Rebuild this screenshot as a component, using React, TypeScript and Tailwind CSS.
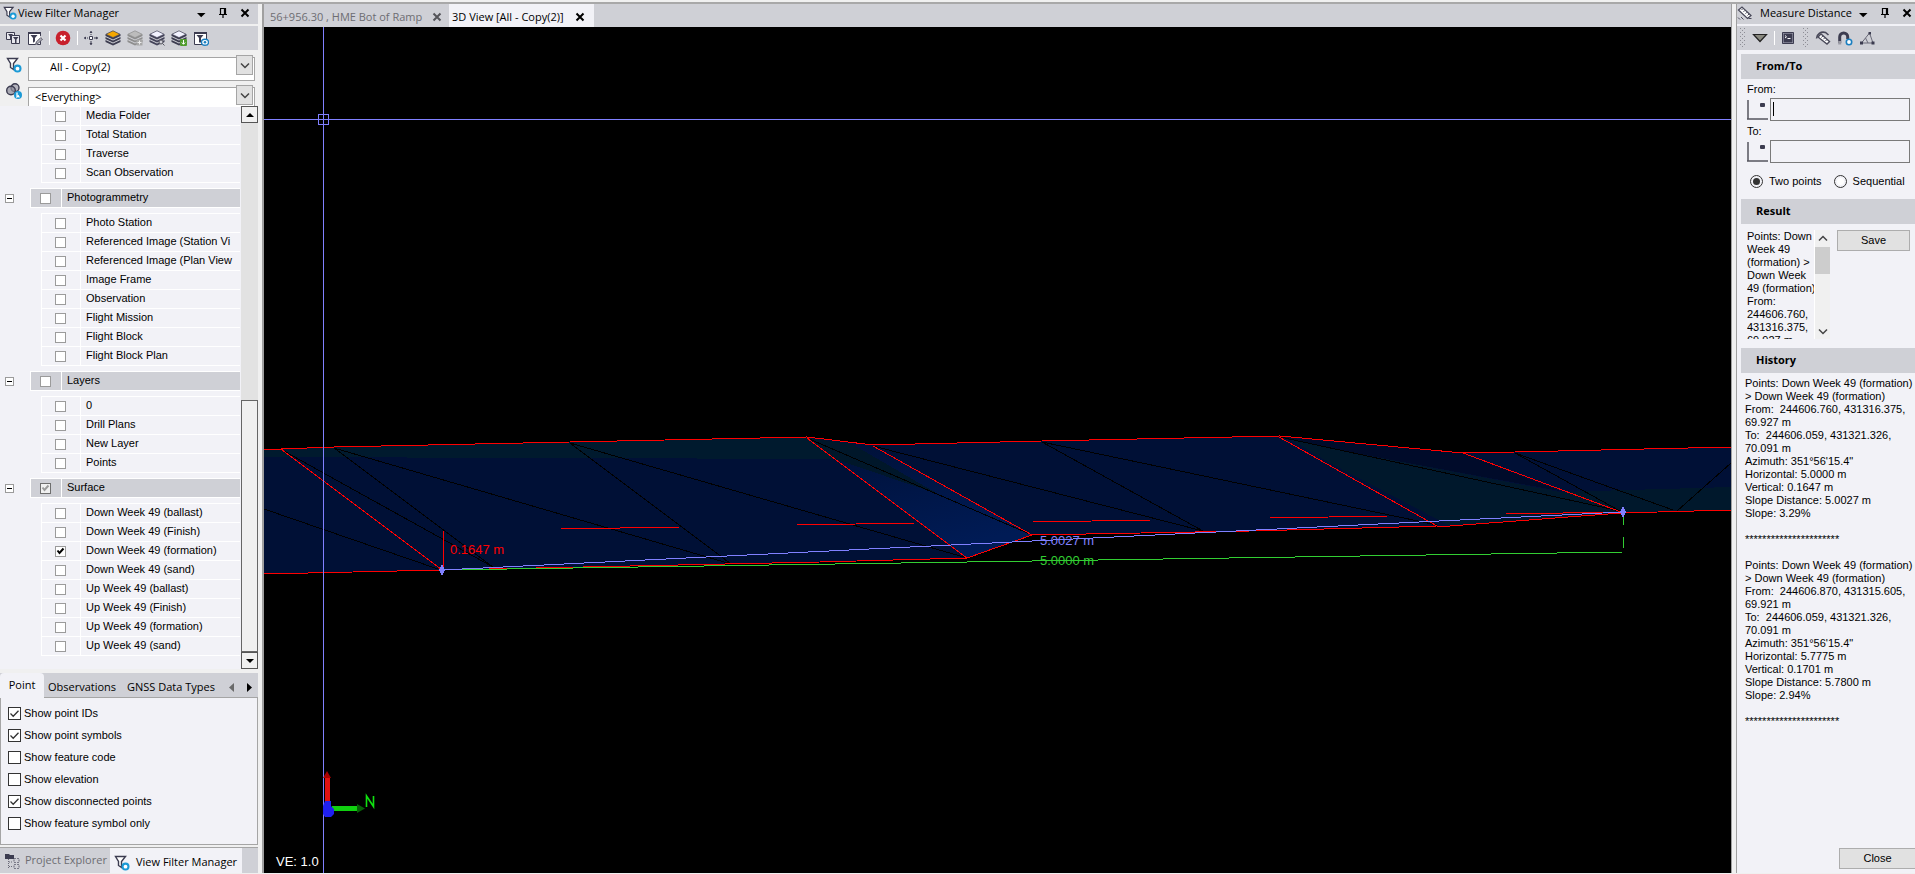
import React from "react";

const UI = "font-['Liberation_Sans',Arial,sans-serif] text-[11px]";
const SEGOE = "font-['Open_Sans','Noto_Sans',sans-serif] text-[11px]";

/* ---------- icons ---------- */

function Svg({ children, size = "size-4" }: { children: React.ReactNode; size?: string }) {
  return (
    <svg viewBox="0 0 16 16" className={`${size} shrink-0`} fill="none" aria-hidden="true">
      {children}
    </svg>
  );
}

function FilterStarIcon({ size }: { size?: string }) {
  return (
    <Svg size={size}>
      <path d="M1.500 1.500h10L7.500 6.500v6l-3-2v-4z" fill="#fff" stroke="#3c3c50" strokeWidth="1.400" />
      <circle cx="11.500" cy="11.500" r="4" fill="#1b9ad6" />
      <circle cx="11.500" cy="11.700" r="1.900" fill="#fff" />
    </Svg>
  );
}

function CirclesIcon() {
  return (
    <Svg>
      <circle cx="9" cy="4.800" r="4" fill="#b4b4be" stroke="#3c3c50" strokeWidth="1.400" />
      <circle cx="5" cy="7.500" r="4.300" fill="#8c8c9a" fillOpacity=".7" stroke="#3c3c50" strokeWidth="1.400" />
      <circle cx="12" cy="12" r="4" fill="#1b9ad6" />
      <path d="M11 9.500v4.500l1.300-1.200 1 1.700" stroke="#fff" strokeWidth="1.300" />
    </Svg>
  );
}

function CopyFilterIcon() {
  return (
    <Svg>
      <path d="M1.500 2.500h8v7h-8z" fill="#e8e8ee" stroke="#3c3c50" />
      <path d="M3 4h5L6 6.500V9H5V6.500z" fill="#3c3c50" />
      <path d="M6.500 5.500h8v8h-8z" fill="#e8e8ee" stroke="#3c3c50" />
      <path d="M8 7h5.500L11.500 9.500V13h-1.500V9.500z" fill="#3c3c50" />
    </Svg>
  );
}

function EditFilterIcon() {
  return (
    <Svg>
      <path d="M1.500 2.500h12v12h-12z" fill="#fff" stroke="#3c3c50" />
      <path d="M1 2h13v2H1z" fill="#3c3c50" />
      <path d="M3.500 5h7L8 8v4.500H6V8z" fill="#3c3c50" />
      <path d="M8 14l6.500-7" stroke="#fff" strokeWidth="4" />
      <path d="M8.500 14.500l1-2.700L13.800 7.500l1.700 1.600-4.500 4.500z" fill="#b0b0b8" stroke="#4a4a5a" strokeWidth=".9" />
    </Svg>
  );
}

function StopIcon() {
  return (
    <Svg>
      <circle cx="8" cy="8" r="7.300" fill="#c8202c" />
      <path d="M5.500 5.500l5 5m0-5l-5 5" stroke="#fff" strokeWidth="2.200" />
    </Svg>
  );
}

function MoveIcon() {
  return (
    <Svg>
      <path d="M6.500 6.500h3v3h-3z" fill="#fff" stroke="#3c3c50" />
      <path d="M8 1v4M8 11v4M1 8h4M11 8h4" stroke="#3c3c50" strokeDasharray="2 1" />
      <path d="M8 1L6.500 3h3zM8 15l-1.500-2h3zM1 8l2-1.500v3zM15 8l-2-1.500v3z" fill="#3c3c50" />
    </Svg>
  );
}

function LayersIcon({ top, body, badge }: { top: string; body: string; badge?: "plus" | "down" | "search" }) {
  return (
    <Svg>
      <path d="M.5 10v2L8 15.500l7.500-3.500v-2L8 13.500z" fill={body} />
      <path d="M.5 7v2L8 12.500 15.500 9V7L8 10.500z" fill={body} />
      <path d="M.5 4v2L8 9.500 15.500 6V4L8 7.500z" fill={body} />
      <path d="M8 .8l7 3.400L8 7.600 1 4.200z" fill={top} stroke={body} strokeWidth=".7" />
      {badge === "plus" && (
        <>
          <rect x="9" y="9" width="7" height="7" rx="1" fill="#4f9a2c" />
          <path d="M12.500 10v4M10.800 12.500l1.700 1.800 1.700-1.800" stroke="#fff" />
        </>
      )}
      {badge === "down" && (
        <>
          <rect x="9.500" y="9.500" width="6" height="6" fill="#a8a8a8" />
          <path d="M12.500 10.500v4M10.500 12.500h4" stroke="#ececec" />
        </>
      )}
      {badge === "search" && (
        <>
          <circle cx="12" cy="12" r="2" fill="#d0d0d8" stroke="#55555f" />
          <path d="M13.500 13.500L15.500 15.500" stroke="#55555f" />
        </>
      )}
    </Svg>
  );
}

function FilterEyeIcon() {
  return (
    <Svg>
      <path d="M1.500 2.500h12v12h-12z" fill="#fff" stroke="#3c3c50" />
      <path d="M1 2h13v2H1z" fill="#3c3c50" />
      <path d="M3.500 5h7L8 8v4.500H6V8z" fill="#3c3c50" />
      <ellipse cx="12" cy="12.300" rx="3.500" ry="3" fill="#fff" stroke="#1b7fc0" strokeWidth="1.400" />
      <circle cx="12" cy="12.300" r="1.300" fill="#1b7fc0" />
    </Svg>
  );
}

function CaretIcon() {
  return (
    <Svg>
      <path d="M4 8h8.500L8.200 12.200z" fill="#000" />
    </Svg>
  );
}

function PinIcon() {
  return (
    <Svg>
      <path d="M5.500 9V3.500h5V9M9.500 3.500V9M4 9.500h8M8 9.500V13" stroke="#000" strokeWidth="1.200" />
    </Svg>
  );
}

function CloseIcon({ color = "#000" }: { color?: string }) {
  return (
    <Svg>
      <path d="M4.500 4.500l7 7m0-7l-7 7" stroke={color} strokeWidth="2" />
    </Svg>
  );
}

function RulerIcon() {
  return (
    <Svg>
      <path d="M1.500 5l3.500-3 9 8.500-3.500 3z" fill="#fff" stroke="#4a4a5a" strokeWidth="1.300" />
      <path d="M6 3.500L4.500 5M8 5.300L6.500 6.800M10 7.200L8.500 8.700M12 9L10.500 10.500" stroke="#4a4a5a" />
      <path d="M1 12.500l2 2M4 12l2.500 2.500M14.500 13.500h-3" stroke="#4a4a5a" />
    </Svg>
  );
}

function TapeIcon() {
  return (
    <Svg>
      <path d="M3 7l3-3 8.500 7.500-2.500 2.500z" fill="#fff" stroke="#4a4a5a" strokeWidth="1.400" />
      <path d="M1.500 8.500C2 4 6 1 10.500 2.500L13.500 5" stroke="#4a4a5a" strokeWidth="1.600" />
      <path d="M8 5.800L6.500 7.500M10 7.500L8.500 9.200M12 9.300L10.500 11" stroke="#4a4a5a" />
    </Svg>
  );
}

function MagnetIcon() {
  return (
    <Svg>
      <path d="M2.700 13V7a4 4 0 018 0v2" stroke="#3c3c50" strokeWidth="3" />
      <path d="M1.200 11h3v3.500h-3z" fill="#9a9aa4" />
      <circle cx="12" cy="12" r="2.700" fill="#fff" stroke="#1b7fc0" strokeWidth="1.600" />
    </Svg>
  );
}

function AngleIcon() {
  return (
    <Svg>
      <path d="M2.500 13L10.500 3M2 13h12M10.500 3L14 13M6.500 8l2.500 5" stroke="#6a6a78" />
      <path d="M9.500 2h2.500v2.500H9.500zM1 11.500h3v3H1zM12.500 11.500h3v3h-3z" fill="#3c3c50" />
    </Svg>
  );
}

function TerminalIcon() {
  return (
    <Svg>
      <path d="M2.500 2.500h11v11h-11z" fill="#3c3c50" stroke="#3c3c50" />
      <path d="M3 3.500h10M3.500 3v10M12.500 3v10M3 12.500h10" stroke="#a0a0b0" strokeWidth=".6" />
      <path d="M5 5.500l1.500 1.300L5 8M7.500 8.500h3" stroke="#fff" />
    </Svg>
  );
}

function DropIcon() {
  return (
    <Svg>
      <path d="M1.500 4.500h13L8 11.500z" fill="#8a8a80" stroke="#222" strokeWidth="1.200" />
    </Svg>
  );
}

function CoordIcon() {
  return (
    <svg viewBox="0 0 22 22" className="size-[22px] shrink-0" fill="none" aria-hidden="true">
      <path d="M1 1v19M0 20h21" stroke="#55555f" strokeWidth="1.500" />
      <rect x="13" y="4" width="5" height="4" rx="1" fill="#3c3c50" />
    </svg>
  );
}

function ExplorerIcon() {
  return (
    <Svg>
      <path d="M0 1h4l1 1h4v4H0z" fill="#3c3c50" />
      <path d="M3.500 6v9M4 9h4M4 13.500h4" stroke="#6a6a78" strokeDasharray="1 1" />
      <path d="M9 5.500h5v4H9zM9 11.500h5v4H9z" stroke="#7a7a88" strokeWidth="1.200" strokeDasharray="2 1" />
    </Svg>
  );
}

function Chevron({ dir }: { dir: "up" | "down" }) {
  return (
    <Svg>
      <path d={dir === "down" ? "M4 6.500l4 4 4-4" : "M4 9.500l4-4 4 4"} stroke="#444" strokeWidth="1.500" />
    </Svg>
  );
}

/* ---------- controls ---------- */

function ToolButton({ label, children }: { label: string; children: React.ReactNode }) {
  return (
    <button aria-label={label} className="flex w-[22px] shrink-0 items-center justify-center">
      {children}
    </button>
  );
}

function Separator() {
  return (
    <span className="flex w-1.5 shrink-0 justify-center">
      <span className="h-3.5 w-px bg-white" />
    </span>
  );
}

function Grip() {
  return (
    <svg viewBox="0 0 6 20" className="h-5 w-1.5 shrink-0" aria-hidden="true">
      {[0, 4, 8, 12, 16].map((y) => (
        <path key={y} d={`M0 ${y}h1v1H0zM4 ${y}h1v1H4zM2 ${y + 2}h1v1H2z`} fill="#8e8e96" />
      ))}
    </svg>
  );
}

function PanelButtons() {
  return (
    <>
      <ToolButton label="Panel menu"><CaretIcon /></ToolButton>
      <ToolButton label="Auto hide"><PinIcon /></ToolButton>
      <ToolButton label="Close panel"><CloseIcon /></ToolButton>
    </>
  );
}

type State = "off" | "on" | "partial";

function TreeCheck({ label, state = "off" }: { label: string; state?: State }) {
  return (
    <span className="relative flex size-[11px] shrink-0">
      <input
        type="checkbox"
        aria-label={label}
        defaultChecked={state !== "off"}
        className={
          state === "partial"
            ? "size-full appearance-none border border-[#6e6e6e] bg-[#f0f0f0]"
            : "size-full appearance-none border border-[#9b9b9b] bg-white"
        }
      />
      {state !== "off" && (
        <svg viewBox="0 0 11 11" className="pointer-events-none absolute inset-0" fill="none" aria-hidden="true">
          <path d="M2.500 4.500l2 2.500 4-4.500" stroke={state === "on" ? "#000" : "#9b9b9b"} strokeWidth="2" />
        </svg>
      )}
    </span>
  );
}

function Items({ names, checked }: { names: string[]; checked?: string }) {
  return (
    <ul className="ml-[41px] border-b border-l border-white">
      {names.map((name) => (
        <li key={name} className="flex h-[19px] border-t border-white">
          <span className="flex w-[39px] items-center border-r border-white pl-[13px]">
            <TreeCheck label={name} state={name === checked ? "on" : "off"} />
          </span>
          <span className="flex-1 overflow-hidden pl-[5px] leading-4 whitespace-nowrap">{name}</span>
        </li>
      ))}
    </ul>
  );
}

function Group({ title, names, state, checked }: { title: string; names: string[]; state?: State; checked?: string }) {
  return (
    <section className="mt-[5px]">
      <div className="mb-[5px] flex h-5 items-center">
        <button
          aria-label={`Collapse ${title}`}
          className="mr-4 ml-[5px] flex size-[9px] items-center justify-center border border-[#9b9b9b] bg-white"
        >
          <span className="h-px w-[5px] bg-black" />
        </button>
        <div className="flex h-full flex-1 border border-r-0 border-white bg-[#cfd0d6]">
          <span className="flex w-[31px] items-center border-r border-white pl-[9px]">
            <TreeCheck label={title} state={state} />
          </span>
          <span className="pl-[5px] leading-4">{title}</span>
        </div>
      </div>
      <Items names={names} checked={checked} />
    </section>
  );
}

function Combo({ label, options, indent }: { label: string; options: string[]; indent: string }) {
  return (
    <div className="relative h-6 flex-1">
      <select
        aria-label={label}
        className={`${SEGOE} ${indent} size-full appearance-none border border-[#a5a5a5] bg-white pb-1`}
      >
        {options.map((o) => (
          <option key={o}>{o}</option>
        ))}
      </select>
      <span className="pointer-events-none absolute top-0.5 right-0.5 bottom-0.5 flex w-[17px] items-center justify-center border border-[#a5a5a5] bg-[#e1e1e1]">
        <Chevron dir="down" />
      </span>
    </div>
  );
}

function Option({ label, on }: { label: string; on?: boolean }) {
  return (
    <label className="flex h-[22px] items-center gap-[3px]">
      <span className="relative flex size-[13px]">
        <input type="checkbox" defaultChecked={on} className="size-full appearance-none border border-[#333] bg-white" />
        {on && (
          <svg viewBox="0 0 13 13" className="pointer-events-none absolute inset-0" fill="none" aria-hidden="true">
            <path d="M2.500 6.500l2.700 2.700L10.500 3.700" stroke="#333" strokeWidth="1.300" />
          </svg>
        )}
      </span>
      {label}
    </label>
  );
}

/* ---------- left panel ---------- */

function FilterPanel() {
  return (
    <aside className="flex w-[258px] shrink-0 flex-col bg-[#f0f0f0]">
      <header className={`${SEGOE} flex h-5 shrink-0 items-center bg-[#cfd0d6] pr-0.5 pb-0.5 pl-[3px]`}>
        <FilterStarIcon size="size-3.5" />
        <h2 className="flex-1 pl-px">View Filter Manager</h2>
        <PanelButtons />
      </header>
      <div className="mt-0.5 flex h-6 shrink-0 items-center bg-[#cfd0d6] pl-0.5">
        <ToolButton label="Copy filter"><CopyFilterIcon /></ToolButton>
        <ToolButton label="Edit filter"><EditFilterIcon /></ToolButton>
        <Separator />
        <ToolButton label="Delete filter"><StopIcon /></ToolButton>
        <Separator />
        <ToolButton label="Isolate selection"><MoveIcon /></ToolButton>
        <ToolButton label="Layers"><LayersIcon top="#f5a700" body="#3c3c50" /></ToolButton>
        <ToolButton label="Lower layer"><LayersIcon top="#bcbcbc" body="#8e8e8e" badge="down" /></ToolButton>
        <ToolButton label="Find layer"><LayersIcon top="#f2f2ff" body="#44445a" badge="search" /></ToolButton>
        <ToolButton label="Add layer"><LayersIcon top="#f2f2ff" body="#3c3c50" badge="plus" /></ToolButton>
        <ToolButton label="Preview filter"><FilterEyeIcon /></ToolButton>
      </div>
      <div className="flex h-14 shrink-0 flex-col gap-1.5 overflow-hidden pt-[3px] pr-[3px]">
        <div className="flex shrink-0">
          <span className="flex w-7 items-center justify-center"><FilterStarIcon /></span>
          <Combo label="View filter" options={["All - Copy(2)"]} indent="pl-[21px]" />
        </div>
        <div className="flex shrink-0">
          <span className="flex w-7 items-start justify-center"><CirclesIcon /></span>
          <Combo label="Selection" options={["<Everything>"]} indent="pl-1.5" />
        </div>
      </div>

      <div className={`${UI} flex min-h-0 flex-1 bg-[#f2f2f7]`}>
        <div className="min-w-0 flex-1 overflow-hidden">
          <Items names={["Media Folder", "Total Station", "Traverse", "Scan Observation"]} />
          <Group
            title="Photogrammetry"
            names={[
              "Photo Station",
              "Referenced Image (Station Vi",
              "Referenced Image (Plan View",
              "Image Frame",
              "Observation",
              "Flight Mission",
              "Flight Block",
              "Flight Block Plan",
            ]}
          />
          <Group title="Layers" names={["0", "Drill Plans", "New Layer", "Points"]} />
          <Group
            title="Surface"
            state="partial"
            checked="Down Week 49 (formation)"
            names={[
              "Down Week 49 (ballast)",
              "Down Week 49 (Finish)",
              "Down Week 49 (formation)",
              "Down Week 49 (sand)",
              "Up Week 49 (ballast)",
              "Up Week 49 (Finish)",
              "Up Week 49 (formation)",
              "Up Week 49 (sand)",
            ]}
          />
        </div>
        <div className="ml-px flex w-[17px] flex-col bg-[#e2e2e2]">
          <button aria-label="Scroll up" className="flex h-[17px] items-center justify-center border border-[#555] bg-[#f0f0f0]">
            <svg viewBox="0 0 8 4" className="h-1 w-2" aria-hidden="true"><path d="M0 4l4-4 4 4z" /></svg>
          </button>
          <div className="flex-[278]" />
          <div className="flex-[250] border border-[#666] bg-[#f0f0f0]" />
          <button aria-label="Scroll down" className="flex h-[17px] items-center justify-center border border-[#555] bg-[#f0f0f0]">
            <svg viewBox="0 0 8 4" className="h-1 w-2" aria-hidden="true"><path d="M0 0l4 4 4-4z" /></svg>
          </button>
        </div>
      </div>

      <div className={`${SEGOE} mt-1 flex h-[25px] shrink-0 items-stretch bg-[#cfd0d6]`}>
        <button className="w-11 rounded-t-sm bg-[#f2f2f7]">Point</button>
        <div className="flex flex-1 items-center border-b border-[#a5a5a5] pt-1">
          <button className="w-[76px]">Observations</button>
          <button className="w-[102px]">GNSS Data Types</button>
          <button aria-label="Previous tab" className="flex w-[18px] justify-center">
            <svg viewBox="0 0 5 9" className="h-[9px] w-[5px]" aria-hidden="true"><path d="M5 0v9L0 4.500z" fill="#6a6a6a" /></svg>
          </button>
          <button aria-label="Next tab" className="flex w-[18px] justify-center">
            <svg viewBox="0 0 5 9" className="h-[9px] w-[5px]" aria-hidden="true"><path d="M0 0v9l5-4.500z" /></svg>
          </button>
        </div>
      </div>
      <div className={`${UI} shrink-0 border border-t-0 border-[#a5a5a5] bg-[#f2f2f7] pt-1 pb-2.5 pl-[7px]`}>
        <Option label="Show point IDs" on />
        <Option label="Show point symbols" on />
        <Option label="Show feature code" />
        <Option label="Show elevation" />
        <Option label="Show disconnected points" on />
        <Option label="Show feature symbol only" />
      </div>

      <nav className={`${SEGOE} mt-0.5 flex h-[26px] shrink-0 border-t border-[#a5a5a5] bg-[#cfd0d6]`}>
        <button className="flex w-[110px] items-center gap-1 pl-[5px] text-[#6d6d72]">
          <ExplorerIcon />
          <span className="whitespace-nowrap">Project Explorer</span>
        </button>
        <button className="flex w-[132px] items-center gap-1.5 bg-[#f2f2f7] pt-1 pl-1">
          <FilterStarIcon />
          <span className="whitespace-nowrap">View Filter Manager</span>
        </button>
      </nav>
    </aside>
  );
}

/* ---------- 3D view ---------- */

const topEdge = "264,448 281,448 334,446 570,441 807,436 873,444 1042,440 1280,435 1463,452 1515,451 1731,446";
const bottomEdge = "264,573 442,569 820,561 967,557 1032,534 1250,530 1437,525 1450,525 1621,512 1731,509";
const bottomEdgeBack = "1731,509 1621,512 1450,525 1437,525 1250,530 1032,534 967,557 820,561 442,569 264,573";

const meshLines =
  "M282 449L493 566M334 447L493 566M334 447L731 563M570 442L731 563M264 508L438 568M570 442L967 557" +
  "M807 437L1032 534M873 445L1203 530M1042 441L1203 530M1042 441L1437 524M1280 436L1620 510" +
  "M1515 452L1620 510M1515 452L1673 509M1677 510L1731 462";

const breakLines =
  "M281 448L442 569M807 437L967 557M873 445L1032 534M1279 436L1437 525M1463 452L1621 511" +
  "M561 528L680 526M797 524L915 522M1033 521L1151 519M1270 517L1388 515M1506 513L1621 511M443 530V568";

function Scene() {
  return (
    <svg
      viewBox="264 27 1467 846"
      preserveAspectRatio="xMinYMin slice"
      className="block size-full font-['Liberation_Sans',Arial,sans-serif]"
      fill="none"
      role="img"
      aria-label="3D view of measured surface"
    >
      <defs>
        <linearGradient id="strip" x1="0" y1="0" x2="0.400" y2="1">
          <stop offset="0" stopColor="#001036" />
          <stop offset="1" stopColor="#001b55" />
        </linearGradient>
      </defs>
      <g shapeRendering="crispEdges" transform="translate(0 1)">
        <polygon points={`${topEdge} ${bottomEdgeBack}`} fill="#001036" />
        <polygon points="264,448 334,446 570,441 807,436 836,458 264,456" fill="#001a2e" />
        <polygon points="807,437 873,445 1032,534 967,557" fill="url(#strip)" />
        <polygon points="807,437 852,443 938,493 835,458" fill="#00172a" />
        <polygon points="1280,436 1463,452 1560,490 1300,442" fill="#000b2a" />
        <polygon points="1290,438 1360,453 1560,491 1731,486 1731,509 1621,512 1450,525 1437,518 1330,462" fill="#00182c" />
        <path d={meshLines} stroke="#000" />
        <polyline points={topEdge} stroke="#f00" />
        <polyline points={bottomEdge} stroke="#f00" />
        <path d={breakLines} stroke="#f00" />
        <path d="M442 569L1623 551M1623 516V524M1623 536V547" stroke="#32cd32" />
        <path d="M442 569L1623 511" stroke="#8080ff" />
        <path d="M442 563l3 6-3 6-3-6zM1623 505l3 6-3 6-3-6z" fill="#8080ff" />
      </g>
      <path d="M264 119.500H1731M323.500 27V873M318.500 114.500h10v10h-10z" stroke="#8080ff" shapeRendering="crispEdges" />
      <g fontSize="13">
        <text x="450" y="554" fill="#f00">0.1647 m</text>
        <text x="1040" y="545" fill="#8080ff">5.0027 m</text>
        <text x="1040" y="565" fill="#32cd32">5.0000 m</text>
        <text x="276" y="866" fill="#fff">VE: 1.0</text>
      </g>
      <path d="M323 778l4-7 4 7z" fill="#a00" />
      <path d="M325 778h5v30h-5z" fill="#e01010" />
      <path d="M332 806h26v5h-26z" fill="#10d010" />
      <path d="M357 804l8 4.500-8 4.500z" fill="#086008" />
      <path d="M325 801h6v5l3 3v5l-3 3h-6l-2-3v-8z" fill="#2020f0" />
      <path d="M366.500 807v-11l7 10.500v-10.500" stroke="#10e010" strokeWidth="1.600" />
    </svg>
  );
}

function Viewport() {
  return (
    <main className="mr-1 ml-1 flex min-w-0 flex-1 flex-col border-r border-l-2 border-[#a0a0a0]">
      <nav className={`${SEGOE} flex h-[23px] shrink-0 items-stretch bg-[#cfd0d6] *:pt-[3px]`}>
        <div className="flex w-[185px] items-center justify-between pr-1 pl-1.5 text-[#6d6d72]">
          <button className="whitespace-nowrap">56+956.30 , HME Bot of Ramp</button>
          <button aria-label="Close tab"><CloseIcon color="#55555a" /></button>
        </div>
        <div className="flex w-[145px] items-center justify-between bg-[#f2f2f7] pr-1.5 pl-[3px]">
          <button className="whitespace-nowrap">3D View [All - Copy(2)]</button>
          <button aria-label="Close tab"><CloseIcon /></button>
        </div>
      </nav>
      <div className="min-h-0 flex-1 overflow-hidden bg-black">
        <Scene />
      </div>
    </main>
  );
}

/* ---------- right panel ---------- */

function SectionTitle({ children }: { children: React.ReactNode }) {
  return (
    <h3 className={`${SEGOE} ml-1 flex h-[25px] shrink-0 items-center bg-[#cfd0d6] pl-[15px] font-bold`}>{children}</h3>
  );
}

function PointField({ id, label, caret }: { id: string; label: string; caret?: boolean }) {
  return (
    <div className="pr-[5px] pl-2.5">
      <label htmlFor={id} className="block h-[19px] pt-0.5 leading-4">{label}</label>
      <div className="flex h-[23px] items-center">
        <CoordIcon />
        <div className="relative ml-px h-full flex-1">
          <input id={id} className="size-full border border-[#7a7a7a] bg-[#f2f2f7] px-1" />
          {caret && <span className="absolute top-1 left-[3px] h-3.5 w-px bg-black" />}
        </div>
      </div>
    </div>
  );
}

function Radio({ label, on }: { label: string; on?: boolean }) {
  return (
    <label className="flex items-center gap-1.5 whitespace-nowrap">
      <input
        type="radio"
        name="mode"
        defaultChecked={on}
        className="size-[13px] appearance-none rounded-full border border-[#333] bg-white bg-clip-content p-0.5 checked:bg-[#333]"
      />
      {label}
    </label>
  );
}

const resultText = `Points: Down
Week 49
(formation) >
Down Week
49 (formation)
From:
244606.760,
431316.375,
69.927 m`;

const historyEntries = [
  `Points: Down Week 49 (formation)
> Down Week 49 (formation)
From:  244606.760, 431316.375,
69.927 m
To:  244606.059, 431321.326,
70.091 m
Azimuth: 351°56'15.4"
Horizontal: 5.0000 m
Vertical: 0.1647 m
Slope Distance: 5.0027 m
Slope: 3.29%`,
  `Points: Down Week 49 (formation)
> Down Week 49 (formation)
From:  244606.870, 431315.605,
69.921 m
To:  244606.059, 431321.326,
70.091 m
Azimuth: 351°56'15.4"
Horizontal: 5.7775 m
Vertical: 0.1701 m
Slope Distance: 5.7800 m
Slope: 2.94%`,
];

function MeasurePanel() {
  return (
    <aside className={`${UI} flex w-[179px] shrink-0 flex-col overflow-hidden border-l border-[#a0a0a0] bg-[#f2f2f7]`}>
      <header className={`${SEGOE} flex h-5 shrink-0 items-center bg-[#cfd0d6] pb-0.5`}>
        <RulerIcon />
        <h2 className="ml-[7px] w-[92px] shrink-0 whitespace-nowrap">Measure Distance</h2>
        <PanelButtons />
      </header>
      <div className="mt-0.5 mb-1 flex h-6 shrink-0 items-center bg-[#cfd0d6] pl-[3px]">
        <Grip />
        <span className="w-[3px]" />
        <ToolButton label="Expand options"><DropIcon /></ToolButton>
        <Separator />
        <ToolButton label="Command pane"><TerminalIcon /></ToolButton>
        <span className="w-1" />
        <Grip />
        <span className="w-[3px]" />
        <ToolButton label="Measure"><TapeIcon /></ToolButton>
        <ToolButton label="Snap"><MagnetIcon /></ToolButton>
        <ToolButton label="Measure angle"><AngleIcon /></ToolButton>
      </div>
      <SectionTitle>From/To</SectionTitle>
      <PointField id="from" label="From:" caret />
      <PointField id="to" label="To:" />
      <div className="flex h-9 shrink-0 items-center gap-3 pl-[13px]">
        <Radio label="Two points" on />
        <Radio label="Sequential" />
      </div>
      <SectionTitle>Result</SectionTitle>
      <div className="mb-[9px] flex items-start pt-1.5 pr-[5px] pl-2.5">
        <textarea
          readOnly
          aria-label="Result"
          value={resultText}
          className="h-[109px] w-[67px] resize-none overflow-hidden bg-transparent leading-[13px] whitespace-pre"
        />
        <div className="flex h-[109px] w-4 flex-col items-center border-l border-white bg-[#f0f0f0]">
          <button aria-label="Scroll result up" className="flex h-[17px] items-center"><Chevron dir="up" /></button>
          <div className="h-[27px] w-full bg-[#cdcdcd]" />
          <div className="flex-1" />
          <button aria-label="Scroll result down" className="flex h-[17px] items-center"><Chevron dir="down" /></button>
        </div>
        <button className="ml-[7px] h-[21px] flex-1 border border-[#adadad] bg-[#e1e1e1]">Save</button>
      </div>
      <SectionTitle>History</SectionTitle>
      <div className="flex-1 pt-1 pl-2 leading-[13px] whitespace-pre">
        {historyEntries.map((entry, i) => (
          <div key={i} className="mb-[13px]">
            <p>{entry}</p>
            <p className="pt-[13px]">**********************</p>
          </div>
        ))}
      </div>
      <button className="mb-1 ml-auto h-[21px] w-[76px] shrink-0 border border-r-0 border-[#adadad] bg-[#e1e1e1]">Close</button>
    </aside>
  );
}

export default function App() {
  return (
    <div className="flex h-screen min-h-[600px] flex-col overflow-hidden bg-[#f0f0f0] text-black">
      <div className="mt-0.5 h-0.5 shrink-0 bg-[#a8a8a8]" />
      <div className="mb-px flex min-h-0 flex-1">
        <FilterPanel />
        <Viewport />
        <MeasurePanel />
      </div>
    </div>
  );
}
